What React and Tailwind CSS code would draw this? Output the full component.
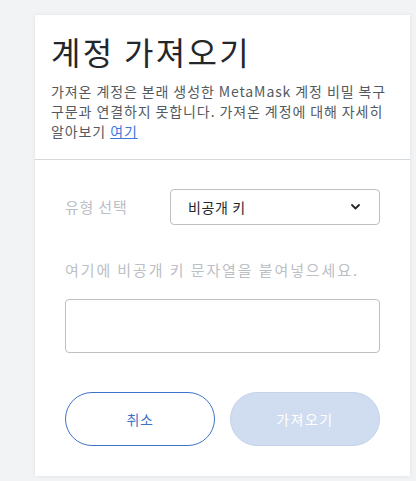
import React from "react";

export default function App() {
  const font = { fontFamily: '"Noto Sans CJK KR", "Noto Sans", sans-serif' };

  return (
    <div className="min-h-screen w-[416px] h-[481px] bg-[#f2f3f4] pt-[15px] pl-[35px]" style={font}>
      <div className="w-[375px] h-[461px] bg-white shadow-[0_0_4px_rgba(0,0,0,0.08)] flex flex-col">
        {/* Header */}
        <div className="px-4 pt-[16px] pb-[18px] border-b border-[#d6d9dc]">
          <h1 className="text-[32px] leading-[40px] tracking-[2.3px] text-[#24272a] font-normal">
            계정 가져오기
          </h1>
          <p className="mt-[10px] text-[14px] leading-[20px] tracking-[0.9px] break-keep text-[#535a61]">
            가져온 계정은 본래 생성한 MetaMask 계정 비밀 복구 구문과 연결하지 못합니다. 가져온 계정에 대해 자세히 알아보기{" "}
            <a className="text-[#3c78d8] underline">여기</a>
          </p>
        </div>

        {/* Body */}
        <div className="px-[30px] pt-[29px] flex flex-col">
          <div className="flex items-center">
            <span className="w-[105px] text-[15px] tracking-[0.8px] text-[#bbc0c5]">유형 선택</span>
            <div className="flex-1 h-[36px] border border-[#bbc0c5] rounded-[4px] flex items-center justify-between pl-[17px] pr-[19px]">
              <span className="text-[14px] tracking-[0.6px] text-[#24272a]">비공개 키</span>
              <svg width="9" height="6" viewBox="0 0 9 6" fill="none">
                <path d="M1 1l3.5 3.5L8 1" stroke="#24272a" strokeWidth="1.8" strokeLinecap="round" strokeLinejoin="round" />
              </svg>
            </div>
          </div>

          <p className="mt-[34px] text-[15px] leading-[22px] tracking-[1.9px] text-[#bbc0c5]">
            여기에 비공개 키 문자열을 붙여넣으세요.
          </p>

          <div className="mt-[18px] h-[54px] border border-[#bbc0c5] rounded-[4px]" />

          <div className="mt-[39px] flex gap-[15px]">
            <button className="w-[150px] h-[54px] rounded-full border border-[#3d72c9] text-[#3d72c9] text-[14px] tracking-[0.5px]">
              취소
            </button>
            <button className="w-[150px] h-[54px] rounded-full bg-[#d0dcef] border border-[#c3d3ec] text-white text-[14px] tracking-[1.5px]">
              가져오기
            </button>
          </div>
        </div>
      </div>
    </div>
  );
}
